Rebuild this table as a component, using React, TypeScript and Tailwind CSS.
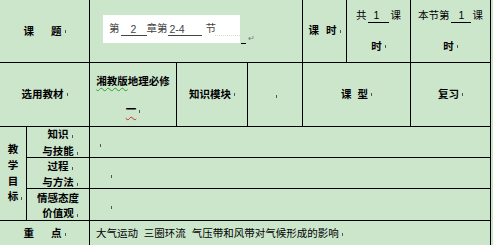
import React from 'react';

const Mark: React.FC = () => (
  <span className="ml-[3px] inline-block h-[3px] w-px shrink-0 bg-[#555] align-baseline" />
);

const Cell: React.FC<{ className?: string; children?: React.ReactNode }> = ({ className = '', children }) => (
  <div className={`flex whitespace-nowrap bg-[#cce6cc] ${className}`}>{children}</div>
);

const Blank: React.FC<{ w: string; children?: React.ReactNode; className?: string }> = ({ w, children, className = '' }) => (
  <span className={`inline-flex h-[14px] shrink-0 items-center border-b border-current leading-[14px] ${w} ${className}`}>{children}</span>
);

export default function App() {
  return (
    <div className="h-[245px] w-[493px] overflow-hidden bg-[#cce6cc] font-['Liberation_Sans','Noto_Sans_CJK_SC',sans-serif] text-[10.5px] text-black">
      <div className="grid w-[491px] grid-cols-[26px_62px_86px_70px_54px_43px_63px_79px] grid-rows-[62px_63px_30px_30px_31px_26px] gap-px border-r border-black bg-black">
        {/* row 1 */}
        <Cell className="col-span-2 items-center justify-center pt-px font-bold">
          <span>课</span>
          <span className="ml-[17px]">题</span>
          <Mark />
        </Cell>
        <Cell className="col-span-3 items-start pl-[13px] pt-[15px]">
          <div className="flex h-[28px] w-[137px] shrink-0 items-center overflow-hidden bg-white pl-[6px] text-[#444]">
            <span className="shrink-0">第</span>
            <Blank w="w-[26px]" className="ml-px justify-center">2</Blank>
            <span className="shrink-0">章第</span>
            <Blank w="w-[34px]" className="pl-[2px]">2-4</Blank>
            <span className="ml-[4px] shrink-0">节</span>
            <span className="ml-[-1px] h-[14px] w-[27px] shrink-0 border-b border-dotted border-[#d8d8d8]" />
          </div>
          <div className="flex h-[30px] shrink-0 items-end">
            <span className="mb-[1px] ml-[1px] h-px w-[5px] bg-black" />
            <span className="mb-[1px] ml-[2px] text-[8px] leading-[10px] text-[#777]">↵</span>
          </div>
        </Cell>
        <Cell className="items-center justify-center font-bold">
          <span>课</span>
          <span className="ml-[7px]">时</span>
          <Mark />
        </Cell>
        <Cell className="flex-col">
          <div className="flex h-[31px] items-center justify-center">
            <span>共</span>
            <Blank w="w-[21px]" className="ml-px justify-center pr-[3px]">1</Blank>
            <span className="ml-[2px]">课</span>
          </div>
          <div className="flex h-[31px] items-center justify-center font-bold">
            <span>时</span>
            <Mark />
          </div>
        </Cell>
        <Cell className="flex-col">
          <div className="flex h-[31px] items-center justify-center">
            <span>本节第</span>
            <Blank w="w-[20px]" className="ml-px justify-center pl-[2px]">1</Blank>
            <span className="ml-[2px]">课</span>
          </div>
          <div className="flex h-[31px] items-center justify-center font-bold">
            <span>时</span>
            <Mark />
          </div>
        </Cell>

        {/* row 2 */}
        <Cell className="col-span-2 items-center justify-center font-bold">
          <span>选用教材</span>
          <Mark />
        </Cell>
        <Cell className="flex-col items-center justify-center font-bold leading-[28px]">
          <div>
            <span className="underline decoration-[#2e9e2e] decoration-wavy decoration-1 underline-offset-[2px]">湘教版</span>
            <span>地理必修</span>
          </div>
          <div>
            <span className="underline decoration-[#e02020] decoration-wavy decoration-1 underline-offset-[3px]">一</span>
            <Mark />
          </div>
        </Cell>
        <Cell className="items-center justify-center font-bold">
          <span>知识模块</span>
          <Mark />
        </Cell>
        <Cell className="items-center justify-center pt-[4px]">
          <Mark />
        </Cell>
        <Cell className="col-span-2 items-center justify-center font-bold">
          <span>课</span>
          <span className="ml-[6px]">型</span>
          <Mark />
        </Cell>
        <Cell className="items-center justify-center font-bold">
          <span>复习</span>
          <Mark />
        </Cell>

        {/* teaching goals */}
        <Cell className="row-span-3 flex-col items-center justify-center font-bold leading-[15.7px]">
          <span>教</span>
          <span>学</span>
          <span>目</span>
          <span className="ml-[4px]">
            标<Mark />
          </span>
        </Cell>
        <Cell className="flex-col items-center justify-center pt-px font-bold leading-[17px]">
          <span className="ml-[4px]">
            知识<Mark />
          </span>
          <span className="ml-[4px]">
            与技能<Mark />
          </span>
        </Cell>
        <Cell className="col-span-6 items-center pl-[7px] pt-[6px]">
          <Mark />
        </Cell>

        <Cell className="flex-col items-center justify-center pt-px font-bold leading-[16px]">
          <span className="ml-[4px]">
            过程<Mark />
          </span>
          <span className="ml-[4px]">
            与方法<Mark />
          </span>
        </Cell>
        <Cell className="col-span-6 items-center pl-[18px] pt-[6px]">
          <Mark />
        </Cell>

        <Cell className="flex-col items-center justify-center pt-[2px] font-bold leading-[15px]">
          <span>情感态度</span>
          <span className="ml-[4px]">
            价值观<Mark />
          </span>
        </Cell>
        <Cell className="col-span-6 items-center pl-[18px] pt-[6px]">
          <Mark />
        </Cell>

        {/* row 6 */}
        <Cell className="col-span-2 items-center justify-center font-bold">
          <span>重</span>
          <span className="ml-[17px]">点</span>
          <Mark />
        </Cell>
        <Cell className="col-span-6 items-center whitespace-pre pl-[6px]">
          <span>大气运动  三圈环流  气压带和风带对气候形成的影响</span>
          <Mark />
        </Cell>
      </div>
    </div>
  );
}
